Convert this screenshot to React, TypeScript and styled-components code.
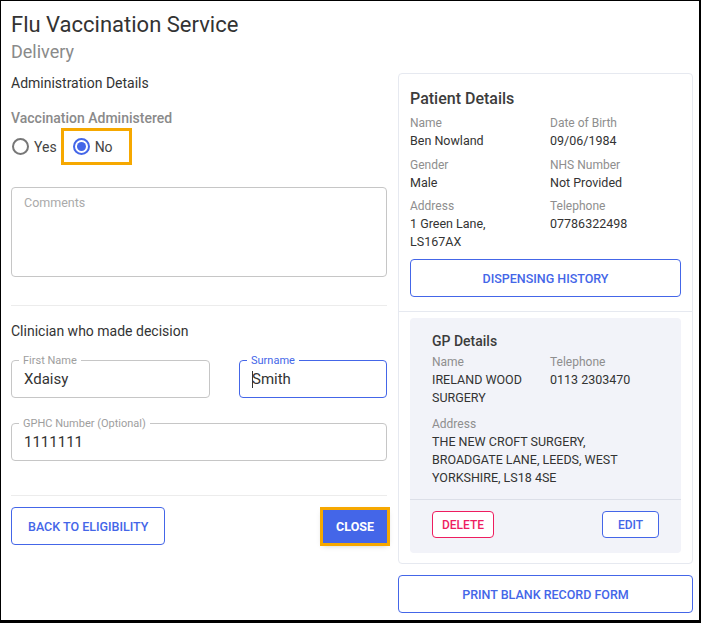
import React from 'react';
import styled, { createGlobalStyle } from 'styled-components';

const blue = '#4466e8';
const red = '#ee1d5f';
const orange = '#f6a800';
const ink = '#333333';
const muted = '#8a8a8a';

const GlobalStyle = createGlobalStyle`
  html, body {
    margin: 0;
    padding: 0;
    background: #ffffff;
  }
  * {
    box-sizing: border-box;
  }
  body {
    font-family: Roboto, 'Liberation Sans', Arial, sans-serif;
    color: ${ink};
  }
`;

const Frame = styled.div`
  width: 701px;
  height: 623px;
  border-style: solid;
  border-color: #000;
  border-width: 1px 2px 3px 1px;
  padding: 10px 6px 0 10px;
  background: #fff;
  overflow: hidden;
`;

const Title = styled.h1`
  margin: 0;
  font-size: 22px;
  line-height: 28px;
  font-weight: 400;
  color: ${ink};
`;

const Subtitle = styled.div`
  margin-top: 1px;
  font-size: 18px;
  line-height: 24px;
  color: ${muted};
`;

const Columns = styled.div`
  margin-top: 9px;
  display: grid;
  grid-template-columns: 376px 295px;
  column-gap: 11px;
  align-items: start;
`;

const LeftColumn = styled.div`
  display: flex;
  flex-direction: column;
`;

const SectionTitle = styled.div<{ $top?: number }>`
  margin-top: ${({ $top }) => $top ?? 0}px;
  font-size: 14px;
  line-height: 20px;
  color: ${ink};
`;

const FieldCaption = styled.div`
  margin-top: 15px;
  font-size: 14px;
  line-height: 20px;
  font-weight: 500;
  color: ${muted};
`;

const RadioRow = styled.div`
  height: 37px;
  display: flex;
  align-items: center;
`;

const RadioOption = styled.label<{ $highlight?: boolean }>`
  display: inline-flex;
  align-items: center;
  gap: 5px;
  height: 31px;
  font-size: 14px;
  color: #444;
  ${({ $highlight }) =>
    $highlight
      ? `
    margin-left: 7px;
    padding: 0 16px 0 9px;
    outline: 3px solid ${orange};
  `
      : `
    padding-left: 1px;
  `}
`;

const RadioCircle = styled.span<{ $checked?: boolean }>`
  width: 17px;
  height: 17px;
  border-radius: 50%;
  border: 2px solid ${({ $checked }) => ($checked ? blue : '#777')};
  display: inline-flex;
  align-items: center;
  justify-content: center;

  &::after {
    content: '';
    width: 9px;
    height: 9px;
    border-radius: 50%;
    background: ${blue};
    display: ${({ $checked }) => ($checked ? 'block' : 'none')};
  }
`;

const CommentsBox = styled.div`
  margin-top: 22px;
  height: 90px;
  border: 1px solid #c6c6c6;
  border-radius: 4px;
  padding: 7px 12px;
  font-size: 12.5px;
  line-height: 16px;
  color: #aaaaaa;
`;

const Divider = styled.hr<{ $top: number }>`
  margin: ${({ $top }) => $top}px 0 0;
  border: 0;
  border-top: 1px solid #ececec;
  height: 0;
`;

const FieldGrid = styled.div`
  margin-top: 19px;
  display: grid;
  grid-template-columns: 199px 148px;
  column-gap: 29px;
`;

const Outlined = styled.div<{ $focused?: boolean; $top?: number }>`
  position: relative;
  margin-top: ${({ $top }) => $top ?? 0}px;
  height: 38px;
  border: 1px solid ${({ $focused }) => ($focused ? blue : '#c6c6c6')};
  border-radius: 4px;
  padding: 0 12px;
  display: flex;
  align-items: center;
  font-size: 15px;
  color: ${ink};
`;

const FloatLabel = styled.span<{ $focused?: boolean }>`
  position: absolute;
  left: 7px;
  top: -7px;
  padding: 0 4px;
  background: #fff;
  font-size: 11px;
  line-height: 13px;
  color: ${({ $focused }) => ($focused ? blue : '#9e9e9e')};
`;

const Caret = styled.span`
  display: inline-block;
  width: 1px;
  height: 17px;
  background: ${ink};
  margin-right: -1px;
`;

const ActionRow = styled.div`
  margin-top: 11px;
  display: flex;
  align-items: center;
  justify-content: space-between;
`;

const OutlineButton = styled.button<{ $tone?: 'blue' | 'red'; $small?: boolean; $full?: boolean }>`
  font-family: Roboto, 'Liberation Sans', Arial, sans-serif;
  height: ${({ $small }) => ($small ? 27 : 38)}px;
  width: ${({ $full }) => ($full ? '100%' : 'auto')};
  min-width: ${({ $small }) => ($small ? 57 : 0)}px;
  padding: 0 ${({ $small }) => ($small ? 9 : 16)}px;
  background: #fff;
  border: 1px solid ${({ $tone }) => ($tone === 'red' ? red : blue)};
  border-radius: 4px;
  color: ${({ $tone }) => ($tone === 'red' ? red : blue)};
  font-size: ${({ $small }) => ($small ? 12 : 12.5)}px;
  font-weight: 500;
  text-transform: uppercase;
  cursor: pointer;
`;

const PrimaryButton = styled.button`
  font-family: Roboto, 'Liberation Sans', Arial, sans-serif;
  height: 33px;
  padding: 0 13px;
  background: ${blue};
  border: 0;
  color: #fff;
  font-size: 12.5px;
  font-weight: 700;
  text-transform: uppercase;
  outline: 3px solid ${orange};
  box-shadow: 0 2px 6px rgba(0, 0, 0, 0.25);
  cursor: pointer;
`;

const RightColumn = styled.div`
  display: flex;
  flex-direction: column;
  gap: 11px;
`;

const Card = styled.div`
  border: 1px solid #e6e9f0;
  border-radius: 4px;
`;

const PatientSection = styled.div`
  padding: 14px 11px 14px 11px;
  border-bottom: 1px solid #e6e9f0;
`;

const CardTitle = styled.div`
  font-size: 16px;
  line-height: 22px;
  font-weight: 500;
  color: #3c3c3c;
`;

const InfoGrid = styled.div<{ $col: number; $gap: number; $top: number }>`
  margin-top: ${({ $top }) => $top}px;
  display: grid;
  grid-template-columns: ${({ $col }) => $col}px 1fr;
  row-gap: ${({ $gap }) => $gap}px;
`;

const InfoItem = styled.div<{ $wide?: boolean }>`
  grid-column: ${({ $wide }) => ($wide ? '1 / -1' : 'auto')};
`;

const InfoLabel = styled.div`
  font-size: 12px;
  line-height: 18px;
  color: #8e8e8e;
`;

const InfoValue = styled.div`
  font-size: 12.5px;
  line-height: 18px;
  color: ${ink};
  white-space: pre-line;
`;

const DispensingButton = styled(OutlineButton)`
  margin-top: 8px;
`;

const GpSection = styled.div`
  padding: 6px 11px 10px;
`;

const GpCard = styled.div`
  background: #f2f3f9;
  border-radius: 4px;
`;

const GpBody = styled.div`
  padding: 13px 22px 12px;
`;

const GpTitle = styled.div`
  font-size: 14px;
  line-height: 20px;
  font-weight: 500;
  color: #3c3c3c;
`;

const GpFooter = styled.div`
  border-top: 1px solid #dcdfe8;
  padding: 11px 22px 15px;
  display: flex;
  justify-content: space-between;
`;

const patient = [
  { label: 'Name', value: 'Ben Nowland' },
  { label: 'Date of Birth', value: '09/06/1984' },
  { label: 'Gender', value: 'Male' },
  { label: 'NHS Number', value: 'Not Provided' },
  { label: 'Address', value: '1 Green Lane,\nLS167AX' },
  { label: 'Telephone', value: '07786322498' },
];

export default function App() {
  return (
    <>
      <GlobalStyle />
      <Frame>
        <Title>Flu Vaccination Service</Title>
        <Subtitle>Delivery</Subtitle>
        <Columns>
          <LeftColumn>
            <SectionTitle>Administration Details</SectionTitle>
            <FieldCaption>Vaccination Administered</FieldCaption>
            <RadioRow>
              <RadioOption>
                <RadioCircle />
                Yes
              </RadioOption>
              <RadioOption $highlight>
                <RadioCircle $checked />
                No
              </RadioOption>
            </RadioRow>
            <CommentsBox>Comments</CommentsBox>
            <Divider $top={28} />
            <SectionTitle $top={15}>Clinician who made decision</SectionTitle>
            <FieldGrid>
              <Outlined>
                <FloatLabel>First Name</FloatLabel>
                Xdaisy
              </Outlined>
              <Outlined $focused>
                <FloatLabel $focused>Surname</FloatLabel>
                <Caret />
                Smith
              </Outlined>
            </FieldGrid>
            <Outlined $top={25}>
              <FloatLabel>GPHC Number (Optional)</FloatLabel>
              1111111
            </Outlined>
            <Divider $top={34} />
            <ActionRow>
              <OutlineButton>Back to Eligibility</OutlineButton>
              <PrimaryButton>Close</PrimaryButton>
            </ActionRow>
          </LeftColumn>

          <RightColumn>
            <Card>
              <PatientSection>
                <CardTitle>Patient Details</CardTitle>
                <InfoGrid $col={140} $gap={5.5} $top={4}>
                  {patient.map((p) => (
                    <InfoItem key={p.label}>
                      <InfoLabel>{p.label}</InfoLabel>
                      <InfoValue>{p.value}</InfoValue>
                    </InfoItem>
                  ))}
                </InfoGrid>
                <DispensingButton $full>Dispensing History</DispensingButton>
              </PatientSection>
              <GpSection>
                <GpCard>
                  <GpBody>
                    <GpTitle>GP Details</GpTitle>
                    <InfoGrid $col={118} $gap={8} $top={2}>
                      <InfoItem>
                        <InfoLabel>Name</InfoLabel>
                        <InfoValue>{'IRELAND WOOD\nSURGERY'}</InfoValue>
                      </InfoItem>
                      <InfoItem>
                        <InfoLabel>Telephone</InfoLabel>
                        <InfoValue>0113 2303470</InfoValue>
                      </InfoItem>
                      <InfoItem $wide>
                        <InfoLabel>Address</InfoLabel>
                        <InfoValue>
                          {'THE NEW CROFT SURGERY,\nBROADGATE LANE, LEEDS, WEST\nYORKSHIRE, LS18 4SE'}
                        </InfoValue>
                      </InfoItem>
                    </InfoGrid>
                  </GpBody>
                  <GpFooter>
                    <OutlineButton $tone="red" $small>
                      Delete
                    </OutlineButton>
                    <OutlineButton $small>Edit</OutlineButton>
                  </GpFooter>
                </GpCard>
              </GpSection>
            </Card>
            <OutlineButton $full>Print Blank Record Form</OutlineButton>
          </RightColumn>
        </Columns>
      </Frame>
    </>
  );
}
